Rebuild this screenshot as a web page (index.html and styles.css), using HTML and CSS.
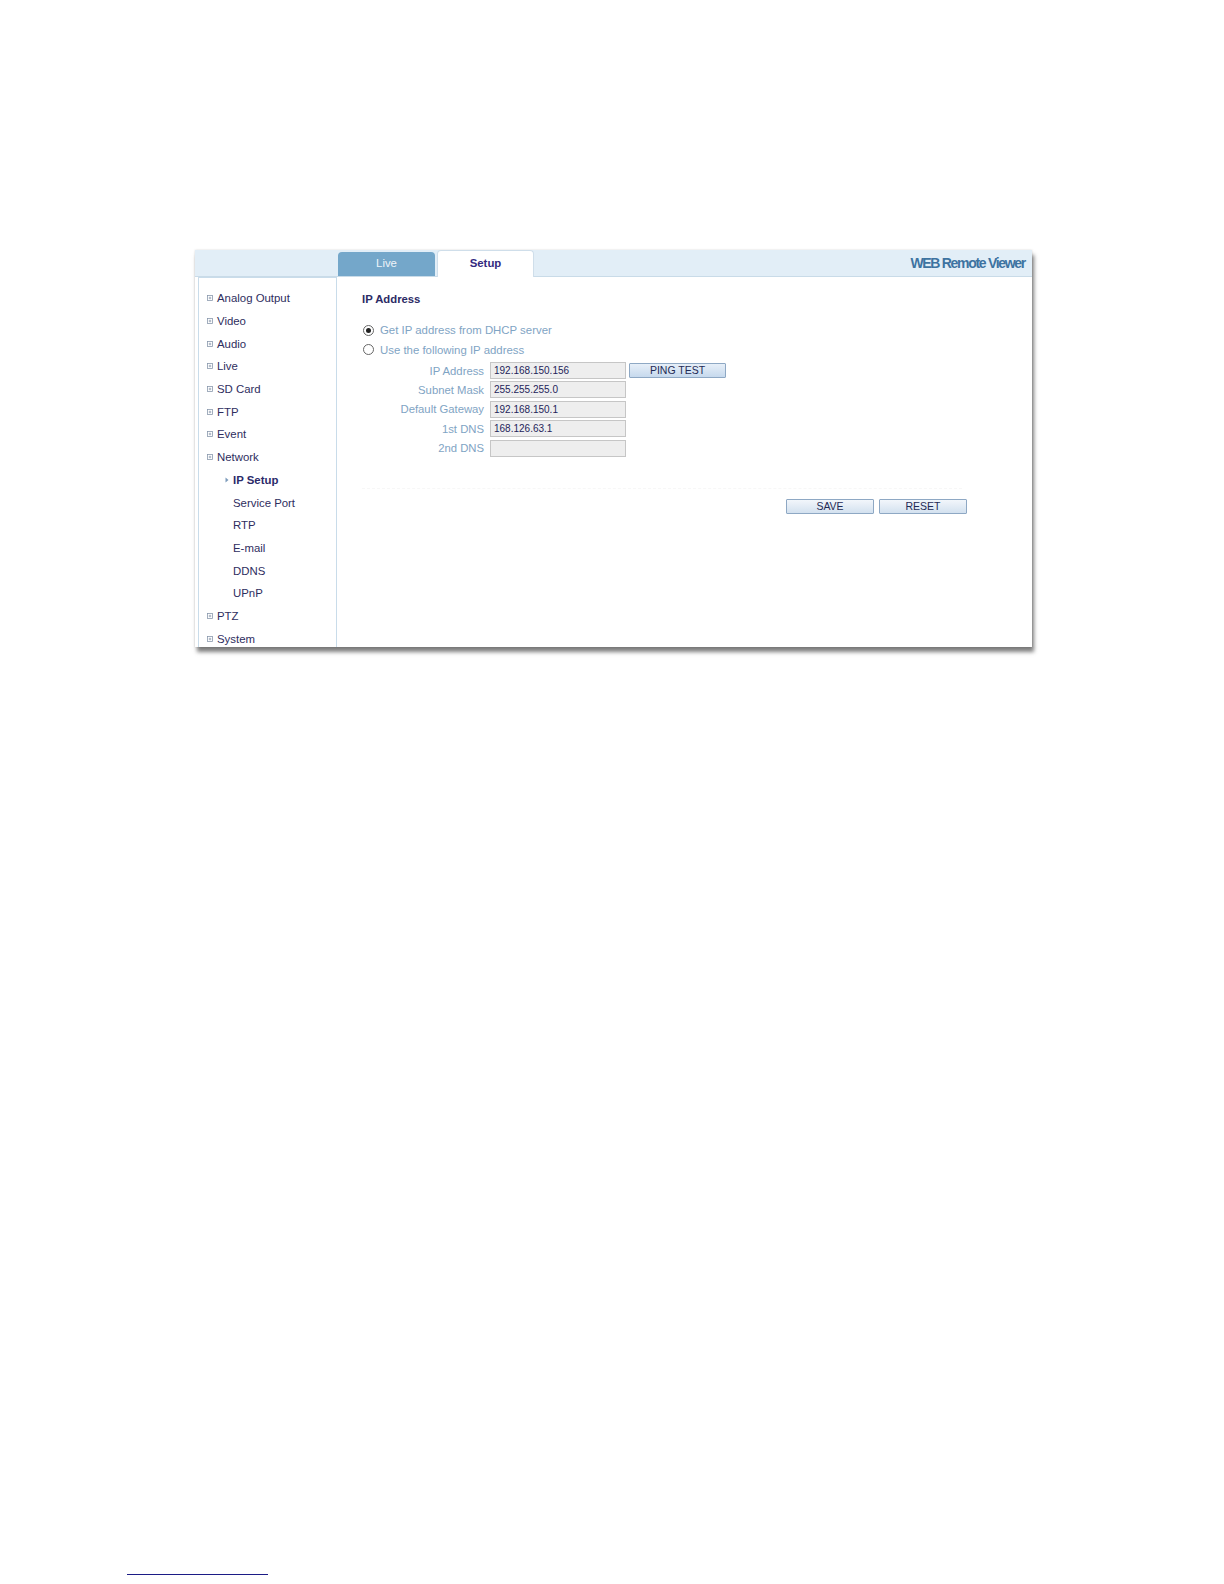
FILE: index.html
```html
<!DOCTYPE html>
<html lang="en">
  <head>
    <meta charset="UTF-8" />
    <meta name="viewport" content="width=device-width, initial-scale=1.0" />
    <title>WEB Remote Viewer - IP Setup</title>
    <link rel="stylesheet" href="styles.css">
  </head>
  <body>
    <div class="viewer">
      <div class="topbar">
        <div class="tabs">
          <div class="tab tab-live">Live</div>
          <div class="tab tab-setup">Setup</div>
        </div>
        <div class="brand">WEB Remote Viewer</div>
      </div>

      <div class="main">
        <ul class="menu">
          <li class="menu-item"><svg class="plus" viewBox="0 0 7 7"><rect x="0.5" y="0.5" width="6" height="6" /><path d="M2 3.5h3M3.5 2v3" /></svg>Analog Output</li>
          <li class="menu-item"><svg class="plus" viewBox="0 0 7 7"><rect x="0.5" y="0.5" width="6" height="6" /><path d="M2 3.5h3M3.5 2v3" /></svg>Video</li>
          <li class="menu-item"><svg class="plus" viewBox="0 0 7 7"><rect x="0.5" y="0.5" width="6" height="6" /><path d="M2 3.5h3M3.5 2v3" /></svg>Audio</li>
          <li class="menu-item"><svg class="plus" viewBox="0 0 7 7"><rect x="0.5" y="0.5" width="6" height="6" /><path d="M2 3.5h3M3.5 2v3" /></svg>Live</li>
          <li class="menu-item"><svg class="plus" viewBox="0 0 7 7"><rect x="0.5" y="0.5" width="6" height="6" /><path d="M2 3.5h3M3.5 2v3" /></svg>SD Card</li>
          <li class="menu-item"><svg class="plus" viewBox="0 0 7 7"><rect x="0.5" y="0.5" width="6" height="6" /><path d="M2 3.5h3M3.5 2v3" /></svg>FTP</li>
          <li class="menu-item"><svg class="plus" viewBox="0 0 7 7"><rect x="0.5" y="0.5" width="6" height="6" /><path d="M2 3.5h3M3.5 2v3" /></svg>Event</li>
          <li class="menu-item"><svg class="plus" viewBox="0 0 7 7"><rect x="0.5" y="0.5" width="6" height="6" /><path d="M2 3.5h3M3.5 2v3" /></svg>Network</li>
          <li class="menu-sub active"><svg class="arrow" viewBox="0 0 4 6"><path d="M0.5 0.5L3.5 3L0.5 5.5Z" /></svg>IP Setup</li>
          <li class="menu-sub">Service Port</li>
          <li class="menu-sub">RTP</li>
          <li class="menu-sub">E-mail</li>
          <li class="menu-sub">DDNS</li>
          <li class="menu-sub">UPnP</li>
          <li class="menu-item"><svg class="plus" viewBox="0 0 7 7"><rect x="0.5" y="0.5" width="6" height="6" /><path d="M2 3.5h3M3.5 2v3" /></svg>PTZ</li>
          <li class="menu-item"><svg class="plus" viewBox="0 0 7 7"><rect x="0.5" y="0.5" width="6" height="6" /><path d="M2 3.5h3M3.5 2v3" /></svg>System</li>
        </ul>

        <div class="content">
          <div class="section-title">IP Address</div>

          <div class="radio-row"><span class="radio checked"></span>Get IP address from DHCP server</div>
          <div class="radio-row"><span class="radio"></span>Use the following IP address</div>

          <div class="form">
            <div class="field">
              <label class="field-label">IP Address</label>
              <div class="field-input">192.168.150.156</div>
              <button class="btn btn-ping">PING TEST</button>
            </div>
            <div class="field">
              <label class="field-label">Subnet Mask</label>
              <div class="field-input">255.255.255.0</div>
            </div>
            <div class="field">
              <label class="field-label">Default Gateway</label>
              <div class="field-input">192.168.150.1</div>
            </div>
            <div class="field">
              <label class="field-label">1st DNS</label>
              <div class="field-input">168.126.63.1</div>
            </div>
            <div class="field">
              <label class="field-label">2nd DNS</label>
              <div class="field-input"></div>
            </div>
          </div>

          <div class="divider"></div>

          <div class="actions">
            <button class="btn btn-action">SAVE</button>
            <button class="btn btn-action">RESET</button>
          </div>
        </div>
      </div>
    </div>

    <div class="footnote"></div>
  </body>
</html>
```

FILE: styles.css
```css
body {
  margin: 0;
  background: #fff;
  font-family: "Liberation Sans", Arial, sans-serif;
}
.viewer {
  width: 837px;
  height: 397px;
  margin: 250px 0 0 195px;
  background: #fff;
  box-shadow: 0 0 2px rgba(0, 0, 0, 0.15), 2px 5px 4px rgba(0, 0, 0, 0.5);
}
.topbar {
  display: flex;
  align-items: flex-end;
  height: 27px;
  box-sizing: border-box;
  background: #e2eef7;
  border-bottom: 1px solid #c9dbe8;
}
.tabs {
  display: flex;
  align-items: flex-end;
  margin-left: 143px;
}
.tab {
  width: 97px;
  box-sizing: border-box;
  text-align: center;
  font-size: 11.4px;
  border-radius: 4px 4px 0 0;
}
.tab-live {
  height: 24px;
  line-height: 22px;
  margin-right: 2px;
  background: #74a7ca;
  color: #eef4f9;
}
.tab-setup {
  height: 27px;
  line-height: 24px;
  margin-bottom: -1px;
  background: #fff;
  border: 1px solid #cfdeea;
  border-bottom: none;
  color: #33297f;
  font-weight: bold;
  position: relative;
}
.brand {
  margin-left: auto;
  align-self: center;
  padding-right: 7px;
  color: #3d73a1;
  font-size: 14px;
  font-weight: bold;
  letter-spacing: -1.3px;
}
.main {
  display: flex;
  height: 370px;
}
.menu {
  list-style: none;
  margin: 0 0 0 3px;
  padding: 9px 0 0 8px;
  width: 139px;
  box-sizing: border-box;
  border: 1px solid #c9dcea;
  border-bottom: none;
  color: #2e2d5e;
  font-size: 11.4px;
}
.menu-item,
.menu-sub {
  display: flex;
  align-items: center;
  height: 22.7px;
}
.menu-sub {
  padding-left: 26px;
}
.menu-sub.active {
  padding-left: 18px;
  font-weight: bold;
  color: #2b2a6a;
}
.plus {
  width: 6px;
  height: 6px;
  margin-right: 4px;
  fill: none;
  stroke: #8796ab;
  stroke-width: 0.9;
}
.arrow {
  width: 4px;
  height: 6px;
  margin-right: 4px;
  fill: #7d9bbb;
}
.content {
  flex: 1;
  padding: 15px 0 0 25px;
}
.section-title {
  font-size: 11.3px;
  font-weight: bold;
  line-height: 14px;
  color: #2c2b66;
  margin-bottom: 17px;
}
.radio-row {
  display: flex;
  align-items: center;
  height: 14px;
  margin-bottom: 5.5px;
  color: #7fa4c4;
  font-size: 11.4px;
}
.radio {
  width: 9px;
  height: 9px;
  margin: 0 6px 0 1px;
  border: 1px solid #666;
  border-radius: 50%;
  background: #fff;
  display: flex;
  align-items: center;
  justify-content: center;
}
.radio.checked::after {
  content: "";
  width: 5px;
  height: 5px;
  border-radius: 50%;
  background: #222;
}
.field {
  display: flex;
  align-items: center;
  height: 17px;
  margin-bottom: 2.4px;
}
.field-label {
  width: 122px;
  margin-right: 6px;
  text-align: right;
  color: #7fa4c4;
  font-size: 11.3px;
}
.field-input {
  width: 136px;
  height: 17px;
  box-sizing: border-box;
  padding: 0 3px;
  line-height: 15px;
  background: #eeeeee;
  border: 1px solid #c6c6c6;
  color: #24245a;
  font-size: 10px;
}
.btn {
  font-family: "Liberation Sans", Arial, sans-serif;
  font-size: 10.5px;
  color: #1f2a55;
  height: 15px;
  padding: 0;
  line-height: 13px;
  border: 1px solid #8ea8c4;
  border-radius: 1px;
  background: linear-gradient(#f2f6fb, #d3e1ef);
}
.btn-ping {
  width: 97px;
  margin-left: 3px;
  background: linear-gradient(#e7eff8, #c6d9ed);
}
.divider {
  width: 600px;
  margin-top: 31px;
  border-top: 1px dashed #f7f7f7;
  height: 0;
}
.actions {
  display: flex;
  justify-content: flex-end;
  gap: 5px;
  margin-top: 10px;
  padding-right: 65px;
}
.btn-action {
  width: 88px;
}
.footnote {
  width: 141px;
  margin: 927px 0 0 127px;
  border-top: 1px solid #1c1c86;
}
```
